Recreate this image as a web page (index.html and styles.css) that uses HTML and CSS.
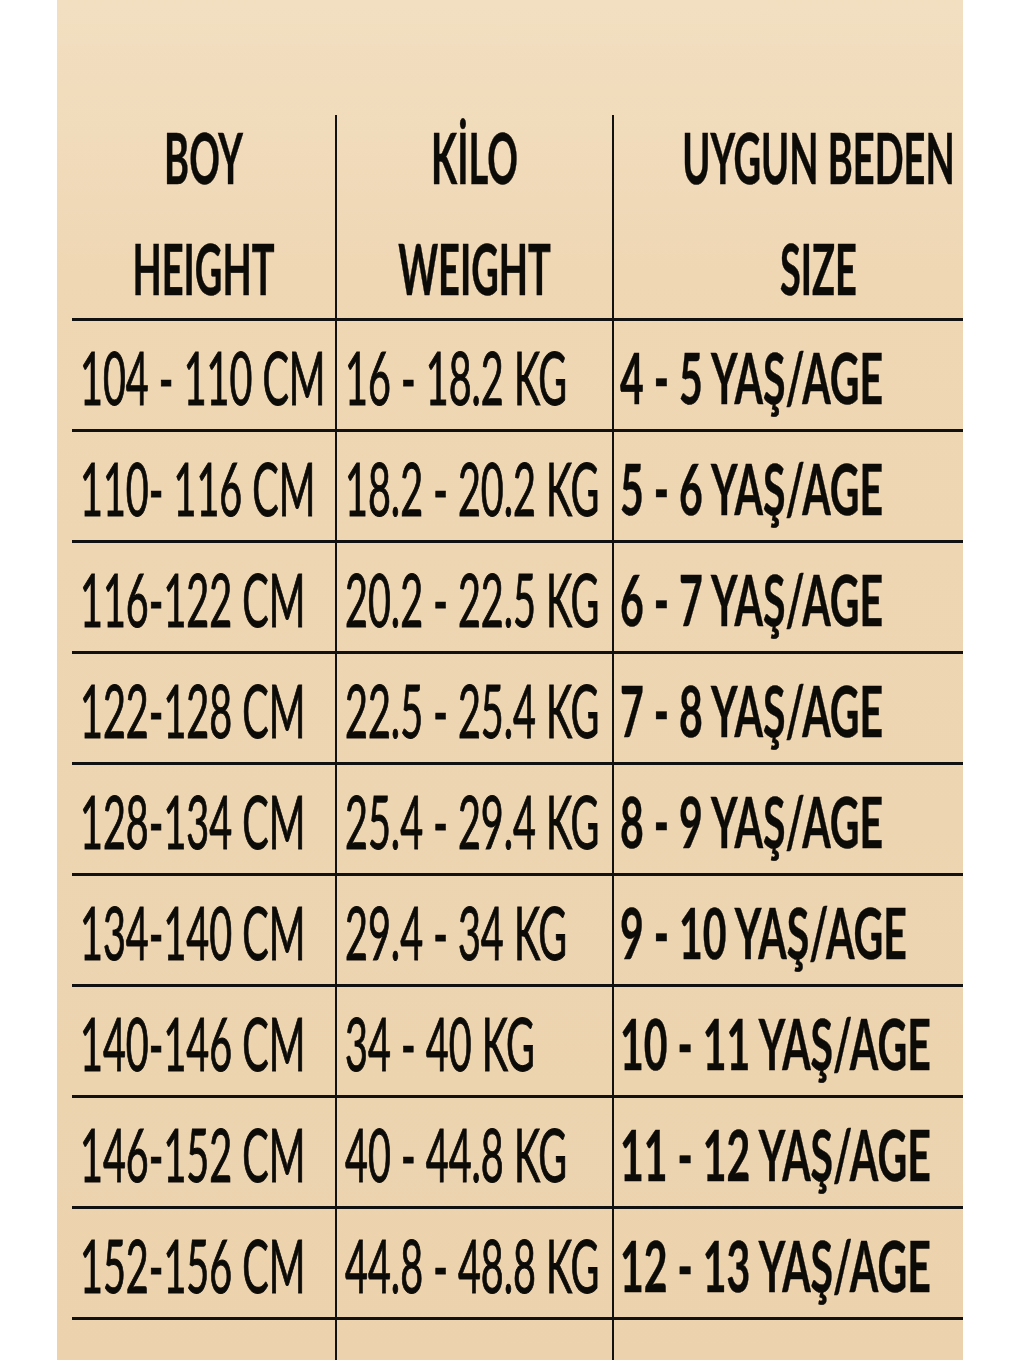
FILE: index.html
```html
<!DOCTYPE html>
<html lang="tr">
<head>
<meta charset="utf-8">
<title>Beden Tablosu</title>
<link rel="stylesheet" href="styles.css">
</head>
<body>
<div class="panel">
  <div class="chart">
    <div class="head">
      <div class="hcell c1"><span class="ht">BOY</span><span class="ht">HEIGHT</span></div>
      <div class="hcell c2"><span class="ht">KİLO</span><span class="ht">WEIGHT</span></div>
      <div class="hcell c3"><span class="ht">UYGUN BEDEN</span><span class="ht">SIZE</span></div>
    </div>
    <div class="row"><div class="cell c1"><span class="t">104 - 110 CM</span></div><div class="cell c2"><span class="t">16 - 18.2 KG</span></div><div class="cell c3"><span class="t b">4 - 5 YAŞ/AGE</span></div></div>
    <div class="row"><div class="cell c1"><span class="t">110- 116 CM</span></div><div class="cell c2"><span class="t">18.2 - 20.2 KG</span></div><div class="cell c3"><span class="t b">5 - 6 YAŞ/AGE</span></div></div>
    <div class="row"><div class="cell c1"><span class="t">116-122 CM</span></div><div class="cell c2"><span class="t">20.2 - 22.5 KG</span></div><div class="cell c3"><span class="t b">6 - 7 YAŞ/AGE</span></div></div>
    <div class="row"><div class="cell c1"><span class="t">122-128 CM</span></div><div class="cell c2"><span class="t">22.5 - 25.4 KG</span></div><div class="cell c3"><span class="t b">7 - 8 YAŞ/AGE</span></div></div>
    <div class="row"><div class="cell c1"><span class="t">128-134 CM</span></div><div class="cell c2"><span class="t">25.4 - 29.4 KG</span></div><div class="cell c3"><span class="t b">8 - 9 YAŞ/AGE</span></div></div>
    <div class="row"><div class="cell c1"><span class="t">134-140 CM</span></div><div class="cell c2"><span class="t">29.4 - 34 KG</span></div><div class="cell c3"><span class="t b">9 - 10 YAŞ/AGE</span></div></div>
    <div class="row"><div class="cell c1"><span class="t">140-146 CM</span></div><div class="cell c2"><span class="t">34 - 40 KG</span></div><div class="cell c3"><span class="t b">10 - 11 YAŞ/AGE</span></div></div>
    <div class="row"><div class="cell c1"><span class="t">146-152 CM</span></div><div class="cell c2"><span class="t">40 - 44.8 KG</span></div><div class="cell c3"><span class="t b">11 - 12 YAŞ/AGE</span></div></div>
    <div class="row"><div class="cell c1"><span class="t">152-156 CM</span></div><div class="cell c2"><span class="t">44.8 - 48.8 KG</span></div><div class="cell c3"><span class="t b">12 - 13 YAŞ/AGE</span></div></div>
    <div class="row last"><div class="cell c1"></div><div class="cell c2"></div><div class="cell c3"></div></div>
  </div>
</div>
</body>
</html>
```

FILE: styles.css
```css
html, body {
  margin: 0;
  padding: 0;
  background: #ffffff;
  height: 1360px;
  overflow: hidden;
}

.panel {
  margin-left: 57px;
  width: 906px;
  height: 1360px;
  background: linear-gradient(180deg, #f2dfc1 0%, #efd7b4 20%, #ecd3ae 100%);
  padding-top: 115px;
  box-sizing: border-box;
  overflow: hidden;
}

.chart {
  margin-left: 15px;
  width: 891px;
  font-family: Lato, "Open Sans", "Liberation Sans", sans-serif;
  color: #0d0b08;
}

.head,
.row {
  display: grid;
  grid-template-columns: 263px 277px 351px;
}

.head {
  height: 203px;
}

.hcell {
  display: flex;
  flex-direction: column;
  align-items: center;
  box-sizing: border-box;
  padding-top: 5px;
}

.hcell.c2,
.hcell.c3,
.cell.c2,
.cell.c3 {
  border-left: 2px solid #111;
}

.hcell.c3 {
  padding-left: 60px;
}

.ht {
  display: block;
  height: 111px;
  line-height: 90px;
  font-weight: 700;
  font-size: 38px;
  white-space: nowrap;
  transform: scaleY(1.88);
  transform-origin: 50% 50%;
  -webkit-text-stroke: 0.3px #0d0b08;
}

.row {
  border-top: 3px solid #111;
  height: 111px;
  box-sizing: border-box;
}

.row.last {
  height: 60px;
}

.cell {
  display: flex;
  align-items: center;
  box-sizing: border-box;
  padding-top: 4px;
}

.cell.c1 {
  padding-left: 8px;
}

.cell.c2 {
  padding-left: 8px;
}

.cell.c3 {
  padding-left: 6px;
}

.t {
  display: inline-block;
  font-size: 39.5px;
  line-height: 1;
  white-space: nowrap;
  transform: scaleY(1.84);
  transform-origin: 50% 50%;
  -webkit-text-stroke: 0.6px #0d0b08;
}

.t.b {
  font-weight: 700;
  font-size: 41px;
  transform: scaleY(1.72);
  -webkit-text-stroke: 0.3px #0d0b08;
}
```
